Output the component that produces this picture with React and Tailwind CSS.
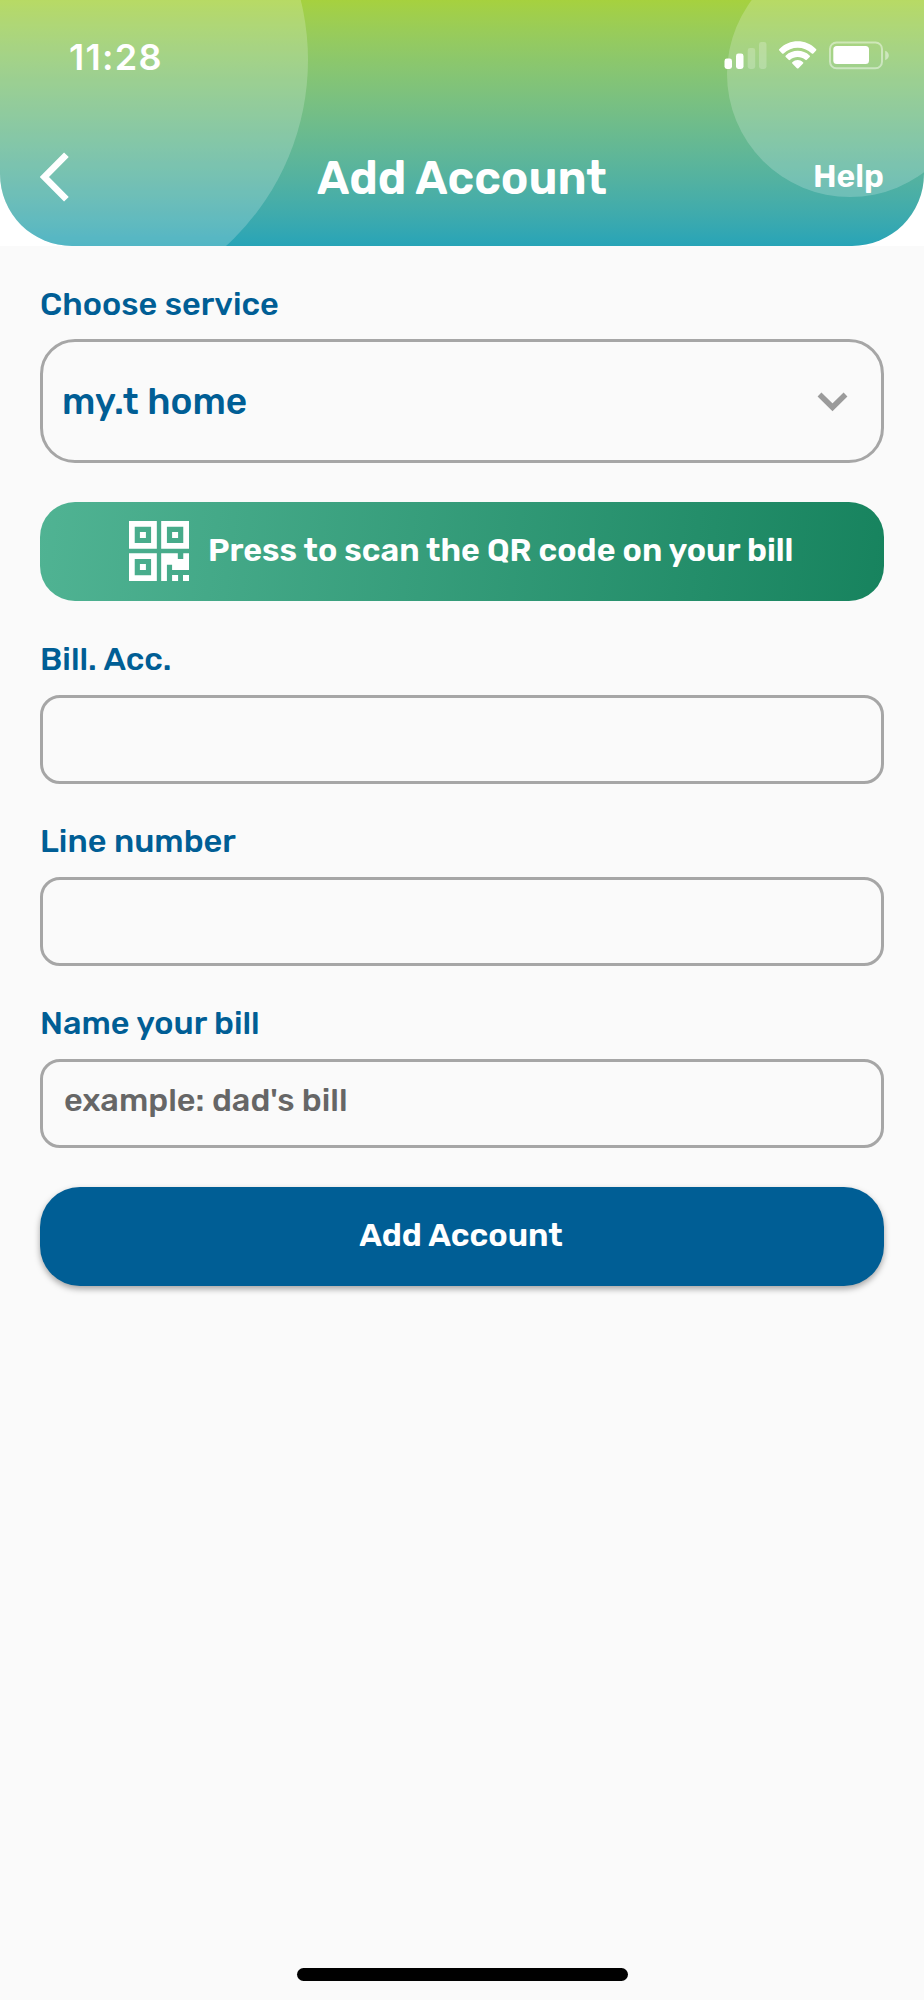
function StatusIcons() {
  return (
    <svg className="h-[30px] w-[168px]" viewBox="0 0 168 30" fill="#fff">
      <rect x="0.5" y="17.5" width="7.5" height="10.5" rx="2.4" />
      <rect x="12" y="12.5" width="7.5" height="15.5" rx="2.4" />
      <rect x="23.7" y="7" width="7.5" height="21" rx="2.4" opacity="0.22" />
      <rect x="35" y="1" width="7.5" height="27" rx="2.4" opacity="0.22" />
      <path d="M55.3 9.6Q54.6 8.8 55.4 8C65.5-2.3 81.900-2.300 92 8Q92.800 8.800 92.100 9.600L89.300 12.400Q88.600 13.100 87.800 12.400C79.900 4.800 67.500 4.800 59.600 12.400Q58.800 13.100 58.100 12.400Z" />
      <path d="M61.700 16Q61 15.200 61.800 14.500C68.500 8.300 78.900 8.300 85.600 14.500Q86.400 15.200 85.700 16L82.800 18.800Q82.100 19.500 81.300 18.800C77 15 70.400 15 66.100 18.800Q65.300 19.500 64.600 18.800Z" />
      <path d="M68.300 22.500Q67.600 21.800 68.400 21.200C71.500 18.400 75.900 18.400 79 21.200Q79.800 21.800 79.100 22.500L74.500 27.200Q73.700 27.900 72.900 27.200Z" />
      <rect x="106" y="1.500" width="52" height="25.800" rx="6.500" fill="none" stroke="#fff" strokeWidth="2" opacity="0.45" />
      <rect x="109.300" y="5" width="35.700" height="18" rx="3.500" />
      <path d="M161.200 9.800C166 11.500 166 17.500 161.200 19.200Z" opacity="0.45" />
    </svg>
  );
}

function QrIcon() {
  return (
    <svg className="h-[60px] w-[60px] shrink-0" viewBox="0 0 11 11" fill="#fff" fillRule="evenodd">
      <path d="M0 0h5.100v5.100H0zM1.050 1.050v3h3v-3zM2 2h1.100v1.100H2z" />
      <path d="M5.900 0H11v5.100H5.900zM6.950 1.050v3h3v-3zM7.900 2H9v1.100H7.900z" />
      <path d="M0 5.900h5.100V11H0zM1.050 6.950v3h3v-3zM2 7.900h1.100V9H2z" />
      <path d="M5.900 5.900h3.050v1.050h1V5.900H11V9H7.900V8h-.95v3H5.900z" />
      <path d="M7.900 9.900H9V11H7.900zM9.900 9.900H11V11H9.900z" />
    </svg>
  );
}

function Label({ children }) {
  return (
    <div className="flex h-10 items-center text-[32.5px] leading-10 font-medium whitespace-nowrap text-[#005e95]">
      {children}
    </div>
  );
}

function Field({ label, placeholder }) {
  return (
    <div className="flex flex-col gap-4">
      <Label>{label}</Label>
      <div className="flex h-[89px] -mb-px items-center rounded-[20px] border-[3px] border-[#a6a6a6] pb-2 pl-[21px] text-[32.5px] leading-10 font-medium text-[#666]">
        {placeholder}
      </div>
    </div>
  );
}

export default function App() {
  return (
    <div className="flex h-[2000px] w-[924px] flex-col bg-[#fafafa] font-['Rubik','Roboto',sans-serif]">
      <div className="bg-white">
        <header className="relative flex h-[246px] flex-col overflow-hidden rounded-b-[72px] bg-linear-to-b from-[#a6d13e] to-[#27a4b7]">
          <div className="absolute top-[-192px] left-[-196px] size-[504px] rounded-full bg-white/20" />
          <div className="absolute top-[-49px] left-[727px] size-[246px] rounded-full bg-white/20" />
          <div className="relative flex h-[112px] items-center justify-between pr-[32px] pl-[69px]">
            <span className="pt-px text-[36px] leading-none font-semibold tracking-[1.3px] text-white font-['Inter',sans-serif]">11:28</span>
            <StatusIcons />
          </div>
          <div className="relative grid h-[134px] grid-cols-[1fr_auto_1fr] px-10 text-white">
            <svg className="mt-[40px] h-[50px] w-[30px]" viewBox="0 0 30 50" fill="none">
              <path d="M26.400 2.800L4.400 25L26.400 47.200" stroke="#fff" strokeWidth="6.600" />
            </svg>
            <h1 className="mt-[37px] text-[46px] leading-[60px] font-semibold">Add Account</h1>
            <span className="mt-[44px] text-right text-[32px] leading-10 font-semibold">Help</span>
          </div>
        </header>
      </div>

      <main className="flex flex-col px-10 pt-[38px]">
        <Label>Choose service</Label>
        <div className="mt-[15px] flex h-[124px] items-center justify-between rounded-[35px] border-[3px] border-[#a6a6a6] pr-[33px] pl-[19px]">
          <span className="text-[37px] leading-none font-medium text-[#005e95]">my.t home</span>
          <svg className="mt-[2px] h-[20px] w-[31px]" viewBox="0 0 31 20" fill="none">
            <path d="M2.500 2.500L15.500 15.300L28.500 2.500" stroke="#9b9b9b" strokeWidth="5.500" />
          </svg>
        </div>

        <button className="mt-[39px] flex h-[99px] items-center rounded-[35px] bg-linear-[97deg] from-[#50b393] to-[#17835e] pb-[2px] pl-[89px] text-white">
          <QrIcon />
          <span className="mb-[2px] ml-[19px] text-[32.2px] leading-10 font-semibold whitespace-nowrap">Press to scan the QR code on your bill</span>
        </button>

        <div className="mt-[38px] flex flex-col gap-[38px]">
          <Field label="Bill. Acc." />
          <Field label="Line number" />
          <Field label="Name your bill" placeholder="example: dad's bill" />
        </div>

        <button className="mt-[40px] flex h-[99px] items-center justify-center rounded-[40px] bg-[#005e95] pr-[2px] pb-[3px] text-[32.3px] leading-10 font-semibold text-white shadow-[0_3px_6px_rgba(0,0,0,0.35)]">
          Add Account
        </button>
      </main>

      <div className="mx-auto mt-auto mb-[19px] h-[13px] w-[331px] rounded-full bg-black" />
    </div>
  );
}
